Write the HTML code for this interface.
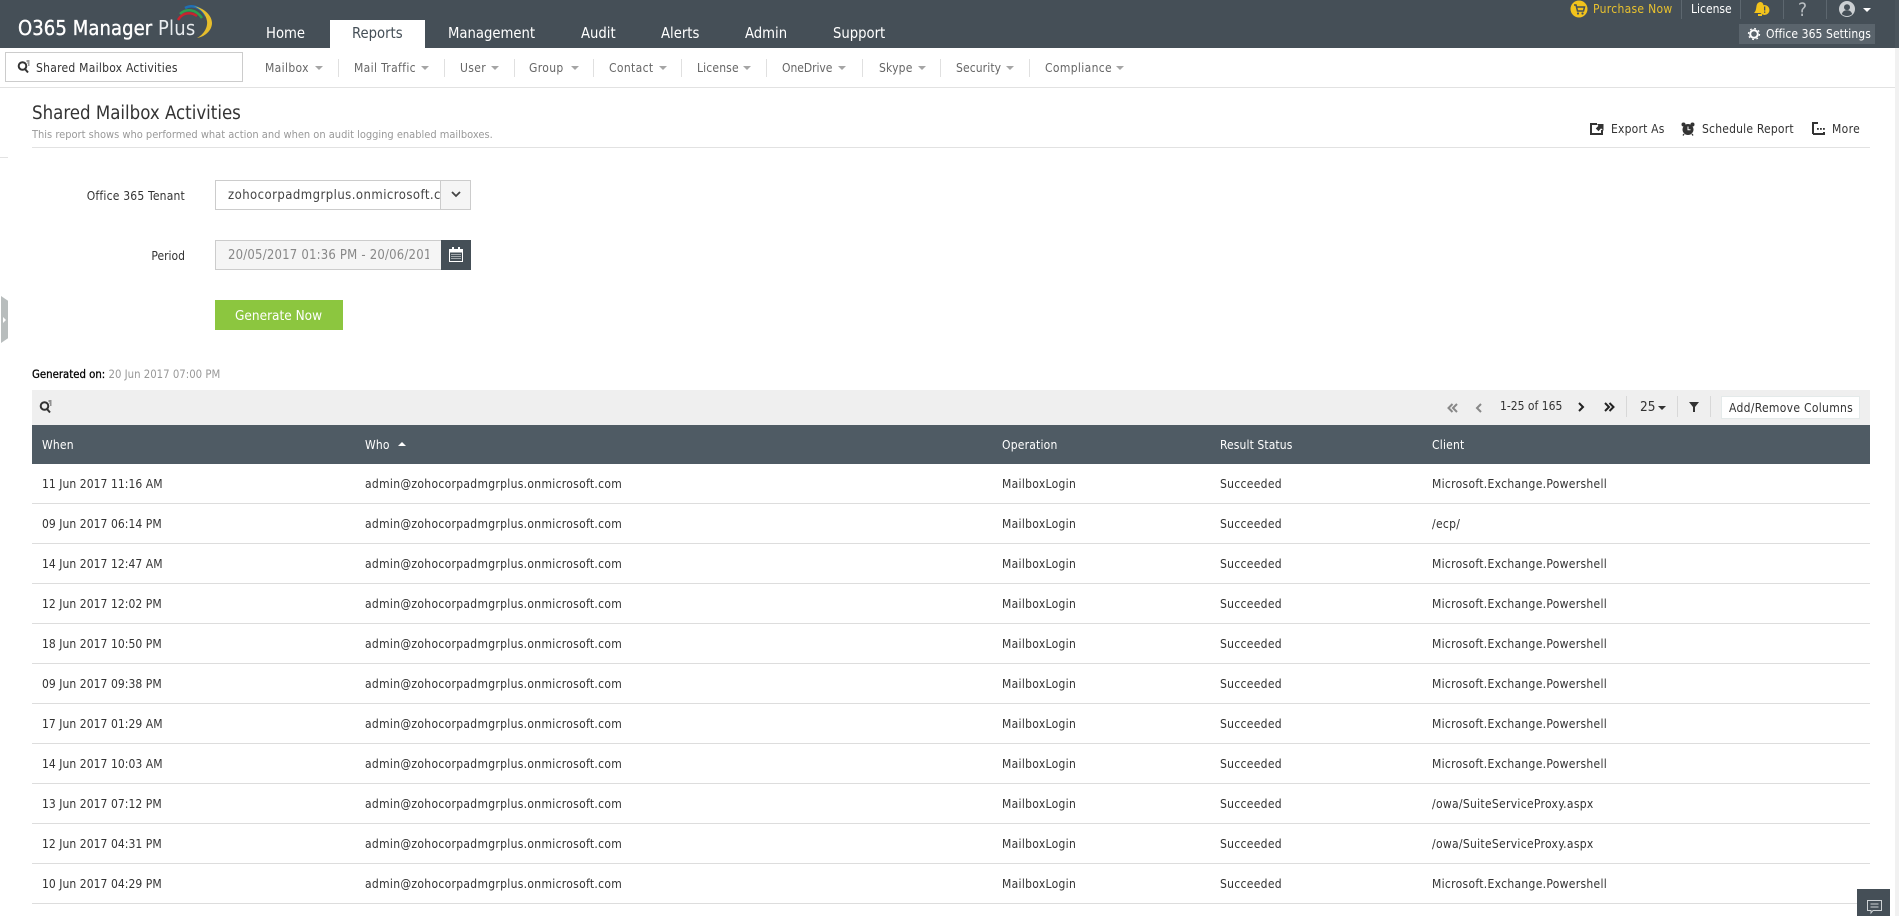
<!DOCTYPE html>
<html lang="en"><head><meta charset="utf-8"><title>Shared Mailbox Activities</title>
<style>
html,body{margin:0;padding:0;background:#fff;width:1899px;height:916px;overflow:hidden}
body{position:relative;font-family:"DejaVu Sans Condensed","DejaVu Sans","Liberation Sans",sans-serif;font-stretch:condensed;font-size:12px;color:#333}
.t{position:absolute;white-space:nowrap;line-height:20px;height:20px}
.b{position:absolute}
.nav{font-size:14.7px;color:#fff;top:24px}
.sub{font-size:12px;color:#666;top:58px;letter-spacing:.35px}
.car{position:absolute;width:0;height:0;border-left:4px solid transparent;border-right:4px solid transparent;border-top:4px solid #a5a5a5;top:66px}
.sep{position:absolute;width:1px;height:18px;background:#e0e0e0;top:59px}
.hsep{position:absolute;width:1px;height:19px;background:#5d676f;top:0}
.th{font-size:12px;color:#fff;top:435px;letter-spacing:.2px}
.td{font-size:12px;color:#333;letter-spacing:.3px}
.d{letter-spacing:.05px}
.act{top:119px;color:#333;letter-spacing:.2px}
.line{position:absolute;left:32px;width:1838px;height:1px;background:#ddd}
.tsep{position:absolute;width:1px;height:21px;background:#d8d8d8;top:396px}
svg{position:absolute;overflow:visible}
</style></head><body>
<div class="b" style="left:0;top:0;width:1899px;height:48px;background:#454f57"></div>
<div class="t" style="left:18px;top:18px;font-size:20px;color:#fff;letter-spacing:.1px;-webkit-text-stroke:.35px #fff">O365 Manager</div>
<div class="t" style="left:158px;top:18px;font-size:20px;color:#e8ecef;letter-spacing:.2px">Plus</div>
<svg style="left:170px;top:0" width="48" height="40" viewBox="0 0 48 40" fill="none">
<path d="M8 20C12 13 20 11 27 16" stroke="#c8242f" stroke-width="2.500"/>
<path d="M10 14C16 8 26 9 32 18" stroke="#2f9e4f" stroke-width="2.500"/>
<path d="M15 8C22 4 31 7 36 16" stroke="#1f6fb5" stroke-width="2.500"/>
<path d="M23 6C35 8 42 16 42 23C42 31 34 37 27 38C33 35 38 28 37 21C36 14 30 8 23 6Z" fill="#e6bd2c"/>
</svg>
<div class="b" style="left:330px;top:20px;width:95px;height:28px;background:#fff"></div>
<div class="t nav" style="left:266px">Home</div>
<div class="t nav" style="left:352px;color:#454f57">Reports</div>
<div class="t nav" style="left:448px">Management</div>
<div class="t nav" style="left:581px">Audit</div>
<div class="t nav" style="left:661px">Alerts</div>
<div class="t nav" style="left:745px">Admin</div>
<div class="t nav" style="left:833px">Support</div>
<svg style="left:1570px;top:0" width="18" height="18" viewBox="0 0 18 18"><circle cx="9" cy="9" r="8.500" fill="#f2c31c"/><path d="M4 5h2l1.500 6h6l1-4H7" fill="none" stroke="#454f57" stroke-width="1.500"/><circle cx="8" cy="13.500" r="1.100" fill="#454f57"/><circle cx="12.500" cy="13.500" r="1.100" fill="#454f57"/></svg>
<div class="t" style="left:1593px;top:-1px;color:#e8c12f;letter-spacing:.3px">Purchase Now</div>
<div class="hsep" style="left:1681px"></div>
<div class="t" style="left:1691px;top:-1px;color:#fff">License</div>
<div class="hsep" style="left:1740px"></div>
<svg style="left:1753px;top:1px" width="17" height="16" viewBox="0 0 17 16"><path d="M1 12C3 10 3 8 3.500 5C4 2 6 1 7.500 1C9 1 10 2 10.500 4L10 12Z" fill="#f2c31c"/><circle cx="11.500" cy="9" r="5" fill="#f2c31c"/><rect x="11" y="5.500" width="1.300" height="4" fill="#454f57"/><rect x="11" y="10.500" width="1.300" height="1.300" fill="#454f57"/><rect x="5" y="13" width="4" height="2" fill="#f2c31c"/></svg>
<div class="hsep" style="left:1783px"></div>
<div class="t" style="left:1798px;top:0;font-size:19px;color:#b9bec2">?</div>
<div class="hsep" style="left:1826px"></div>
<svg style="left:1839px;top:1px" width="16" height="16" viewBox="0 0 16 16"><circle cx="8" cy="8" r="8" fill="#ccd0d3"/><circle cx="8" cy="6.200" r="3" fill="#454f57"/><path d="M2.800 13c1-3 3-3.800 5.200-3.800s4.200.8 5.200 3.800c-3 2.600-7.400 2.600-10.400 0z" fill="#454f57"/></svg>
<div class="b" style="left:1863px;top:8px;width:0;height:0;border-left:4px solid transparent;border-right:4px solid transparent;border-top:4px solid #fff"></div>
<div class="b" style="left:1739px;top:24px;width:136px;height:20px;background:#5a646c"></div>
<svg style="left:1748px;top:28px" width="12" height="12" viewBox="0 0 12 12"><circle cx="6" cy="6" r="3.800" fill="none" stroke="#fff" stroke-width="2"/><circle cx="6" cy="6" r="5.500" fill="none" stroke="#fff" stroke-width="1.300" stroke-dasharray="1.800 2.520"/></svg>
<div class="t" style="left:1766px;top:24px;color:#fff;letter-spacing:.08px">Office 365 Settings</div>

<div class="b" style="left:0;top:87px;width:1895px;height:1px;background:#e2e2e2"></div>
<div class="b" style="left:5px;top:52px;width:236px;height:28px;border:1px solid #ccc"></div>
<svg style="left:17px;top:60px" width="14" height="14" viewBox="0 0 14 14" fill="none"><circle cx="5.500" cy="6" r="3.800" stroke="#333" stroke-width="2"/><path d="M8 9l3 3.500" stroke="#333" stroke-width="2"/><path d="M9.500 1h3M10.500 3h2M11 5h1.500" stroke="#333" stroke-width=".9"/></svg>
<div class="t" style="left:36px;top:58px;color:#333;letter-spacing:.25px">Shared Mailbox Activities</div>
<div class="t sub" style="left:265px">Mailbox</div><div class="car" style="left:315px"></div><div class="sep" style="left:338px"></div>
<div class="t sub" style="left:354px">Mail Traffic</div><div class="car" style="left:421px"></div><div class="sep" style="left:444px"></div>
<div class="t sub" style="left:460px">User</div><div class="car" style="left:491px"></div><div class="sep" style="left:514px"></div>
<div class="t sub" style="left:529px">Group</div><div class="car" style="left:571px"></div><div class="sep" style="left:593px"></div>
<div class="t sub" style="left:609px">Contact</div><div class="car" style="left:659px"></div><div class="sep" style="left:681px"></div>
<div class="t sub" style="left:697px;letter-spacing:.15px">License</div><div class="car" style="left:743px"></div><div class="sep" style="left:766px"></div>
<div class="t sub" style="left:782px;letter-spacing:-.05px">OneDrive</div><div class="car" style="left:838px"></div><div class="sep" style="left:862px"></div>
<div class="t sub" style="left:879px;letter-spacing:.2px">Skype</div><div class="car" style="left:918px"></div><div class="sep" style="left:940px"></div>
<div class="t sub" style="left:956px;letter-spacing:.1px">Security</div><div class="car" style="left:1006px"></div><div class="sep" style="left:1029px"></div>
<div class="t sub" style="left:1045px">Compliance</div><div class="car" style="left:1116px"></div>

<div class="t" style="left:32px;top:104px;font-size:18.500px;color:#333">Shared Mailbox Activities</div>
<div class="t" style="left:32px;top:125px;font-size:11px;color:#999;letter-spacing:-.01px">This report shows who performed what action and when on audit logging enabled mailboxes.</div>
<div class="b" style="left:32px;top:147px;width:1838px;height:1px;background:#e2e2e2"></div>

<svg style="left:1590px;top:122px" width="14" height="14" viewBox="0 0 14 14"><path d="M0 1h7v2H2v8h9V8h2v5H0z" fill="#333"/><path d="M8 2.500h5v5l-2-2-2.500 3-2-2 2.500-2.500z" fill="#333" stroke="#333"/></svg>
<div class="t act" style="left:1611px">Export As</div>
<svg style="left:1681px;top:121px" width="14" height="15" viewBox="0 0 14 15"><circle cx="7" cy="8.500" r="5.500" fill="#333"/><circle cx="2.500" cy="3.500" r="2" fill="#333"/><circle cx="11.500" cy="3.500" r="2" fill="#333"/><path d="M7 5.500v3.200h2.500" stroke="#fff" fill="none"/><path d="M3 13l-1 1.500M11 13l1 1.500" stroke="#333" stroke-width="1.300"/></svg>
<div class="t act" style="left:1702px">Schedule Report</div>
<svg style="left:1812px;top:122px" width="13" height="13" viewBox="0 0 13 13"><path d="M1 12V1h5M1 12h11v-2" stroke="#333" stroke-width="2" fill="none"/><rect x="5" y="6" width="1.800" height="1.800" fill="#333"/><rect x="8" y="6" width="1.800" height="1.800" fill="#333"/><rect x="11" y="6" width="1.800" height="1.800" fill="#333"/></svg>
<div class="t act" style="left:1832px;letter-spacing:.35px">More</div>

<div class="t" style="right:1714px;top:186px;color:#333;letter-spacing:.2px">Office 365 Tenant</div>
<div class="b" style="left:215px;top:180px;width:254px;height:28px;border:1px solid #ccc"></div>
<div class="b" style="left:440px;top:181px;width:29px;height:28px;background:#f5f5f5;border-left:1px solid #ccc"></div>
<div class="t" style="left:228px;top:186px;width:212px;overflow:hidden;font-size:13px;color:#444;letter-spacing:.45px">zohocorpadmgrplus.onmicrosoft.com</div>
<svg style="left:451px;top:191px" width="10" height="7" viewBox="0 0 10 7"><path d="M1 1l4 4 4-4" fill="none" stroke="#444" stroke-width="1.800"/></svg>
<div class="t" style="right:1714px;top:246px;color:#333">Period</div>
<div class="b" style="left:215px;top:240px;width:225px;height:28px;border:1px solid #ccc;background:#f5f5f5"></div>
<div class="t" style="left:228px;top:246px;width:201px;overflow:hidden;font-size:13px;color:#888;letter-spacing:.2px">20/05/2017 01:36 PM - 20/06/2017 01:36 PM</div>
<div class="b" style="left:441px;top:240px;width:30px;height:30px;background:#454f57"></div>
<svg style="left:449px;top:247px" width="14" height="15" viewBox="0 0 14 15"><path d="M.5 2.500h13v12H.5z" fill="none" stroke="#fff"/><path d="M.5 2.500h13v3H.5z" fill="#fff"/><rect x="3" y="0" width="2" height="3.500" fill="#fff"/><rect x="9" y="0" width="2" height="3.500" fill="#fff"/><path d="M2.500 7.500h9M2.500 9.500h9M2.500 11.500h9" stroke="#fff" stroke-dasharray="1 1"/></svg>
<div class="b" style="left:215px;top:300px;width:128px;height:30px;background:#8cc63f"></div>
<div class="t" style="left:235px;top:306px;font-size:13.500px;color:#fff">Generate Now</div>
<div class="b" style="left:1px;top:296px;width:7px;height:47px;background:#b8bdbd;clip-path:polygon(0 0,100% 10%,100% 90%,0 100%)"></div>
<div class="b" style="left:3px;top:317px;width:0;height:0;border-left:3px solid #fff;border-top:3px solid transparent;border-bottom:3px solid transparent"></div>
<div class="b" style="left:0;top:157px;width:8px;height:1px;background:#e2e2e2"></div>
<div class="t" style="left:32px;top:365px;font-size:11.300px;color:#000"><span style="-webkit-text-stroke:.25px #000">Generated on:</span> <span style="color:#999">20 Jun 2017 07:00 PM</span></div>

<div class="b" style="left:32px;top:390px;width:1838px;height:35px;background:#efefef"></div>
<svg style="left:39px;top:400px" width="14" height="14" viewBox="0 0 14 14" fill="none"><circle cx="5.500" cy="6" r="3.800" stroke="#333" stroke-width="2"/><path d="M8 9l3 3.500" stroke="#333" stroke-width="2"/><path d="M9.500 1h3M10.500 3h2M11 5h1.500" stroke="#333" stroke-width=".9"/></svg>
<svg style="left:1447px;top:403px" width="11" height="10" viewBox="0 0 11 10" fill="none" stroke="#888" stroke-width="2"><path d="M5.500 1l-4 4 4 4M10 1L6 5l4 4"/></svg>
<svg style="left:1475px;top:403px" width="7" height="10" viewBox="0 0 7 10" fill="none" stroke="#888" stroke-width="2"><path d="M6 1L2 5l4 4"/></svg>
<div class="t" style="left:1500px;top:396px">1-25 of 165</div>
<svg style="left:1578px;top:402px" width="7" height="10" viewBox="0 0 7 10" fill="none" stroke="#222" stroke-width="2"><path d="M1 1l4 4-4 4"/></svg>
<svg style="left:1604px;top:402px" width="11" height="10" viewBox="0 0 11 10" fill="none" stroke="#222" stroke-width="2"><path d="M1 1l4 4-4 4M5.500 1l4 4-4 4"/></svg>
<div class="tsep" style="left:1626px"></div>
<div class="t" style="left:1640px;top:397px;font-size:13.500px">25</div>
<div class="b" style="left:1658px;top:406px;width:0;height:0;border-left:4px solid transparent;border-right:4px solid transparent;border-top:4px solid #333"></div>
<div class="tsep" style="left:1677px"></div>
<svg style="left:1689px;top:402px" width="10" height="10" viewBox="0 0 10 10"><path d="M0 0h10L6 5v5H4V5z" fill="#333"/></svg>
<div class="tsep" style="left:1710px"></div>
<div class="b" style="left:1721px;top:396px;width:137px;height:21px;background:#fff;border:1px solid #e4eaea"></div>
<div class="t" style="left:1729px;top:398px;letter-spacing:.3px">Add/Remove Columns</div>

<div class="b" style="left:32px;top:425px;width:1838px;height:39px;background:#4f5b64"></div>
<div class="t th" style="left:42px">When</div>
<div class="t th" style="left:365px">Who</div>
<div class="b" style="left:398px;top:442px;width:0;height:0;border-left:4px solid transparent;border-right:4px solid transparent;border-bottom:4px solid #fff"></div>
<div class="t th" style="left:1002px">Operation</div>
<div class="t th" style="left:1220px;letter-spacing:.1px">Result Status</div>
<div class="t th" style="left:1432px">Client</div>

<div class="t td d" style="left:42px;top:474px">11 Jun 2017 11:16 AM</div><div class="t td" style="left:365px;top:474px">admin@zohocorpadmgrplus.onmicrosoft.com</div><div class="t td" style="left:1002px;top:474px">MailboxLogin</div><div class="t td" style="left:1220px;top:474px">Succeeded</div><div class="t td" style="left:1432px;top:474px">Microsoft.Exchange.Powershell</div><div class="line" style="top:503px"></div>
<div class="t td d" style="left:42px;top:514px">09 Jun 2017 06:14 PM</div><div class="t td" style="left:365px;top:514px">admin@zohocorpadmgrplus.onmicrosoft.com</div><div class="t td" style="left:1002px;top:514px">MailboxLogin</div><div class="t td" style="left:1220px;top:514px">Succeeded</div><div class="t td" style="left:1432px;top:514px">/ecp/</div><div class="line" style="top:543px"></div>
<div class="t td d" style="left:42px;top:554px">14 Jun 2017 12:47 AM</div><div class="t td" style="left:365px;top:554px">admin@zohocorpadmgrplus.onmicrosoft.com</div><div class="t td" style="left:1002px;top:554px">MailboxLogin</div><div class="t td" style="left:1220px;top:554px">Succeeded</div><div class="t td" style="left:1432px;top:554px">Microsoft.Exchange.Powershell</div><div class="line" style="top:583px"></div>
<div class="t td d" style="left:42px;top:594px">12 Jun 2017 12:02 PM</div><div class="t td" style="left:365px;top:594px">admin@zohocorpadmgrplus.onmicrosoft.com</div><div class="t td" style="left:1002px;top:594px">MailboxLogin</div><div class="t td" style="left:1220px;top:594px">Succeeded</div><div class="t td" style="left:1432px;top:594px">Microsoft.Exchange.Powershell</div><div class="line" style="top:623px"></div>
<div class="t td d" style="left:42px;top:634px">18 Jun 2017 10:50 PM</div><div class="t td" style="left:365px;top:634px">admin@zohocorpadmgrplus.onmicrosoft.com</div><div class="t td" style="left:1002px;top:634px">MailboxLogin</div><div class="t td" style="left:1220px;top:634px">Succeeded</div><div class="t td" style="left:1432px;top:634px">Microsoft.Exchange.Powershell</div><div class="line" style="top:663px"></div>
<div class="t td d" style="left:42px;top:674px">09 Jun 2017 09:38 PM</div><div class="t td" style="left:365px;top:674px">admin@zohocorpadmgrplus.onmicrosoft.com</div><div class="t td" style="left:1002px;top:674px">MailboxLogin</div><div class="t td" style="left:1220px;top:674px">Succeeded</div><div class="t td" style="left:1432px;top:674px">Microsoft.Exchange.Powershell</div><div class="line" style="top:703px"></div>
<div class="t td d" style="left:42px;top:714px">17 Jun 2017 01:29 AM</div><div class="t td" style="left:365px;top:714px">admin@zohocorpadmgrplus.onmicrosoft.com</div><div class="t td" style="left:1002px;top:714px">MailboxLogin</div><div class="t td" style="left:1220px;top:714px">Succeeded</div><div class="t td" style="left:1432px;top:714px">Microsoft.Exchange.Powershell</div><div class="line" style="top:743px"></div>
<div class="t td d" style="left:42px;top:754px">14 Jun 2017 10:03 AM</div><div class="t td" style="left:365px;top:754px">admin@zohocorpadmgrplus.onmicrosoft.com</div><div class="t td" style="left:1002px;top:754px">MailboxLogin</div><div class="t td" style="left:1220px;top:754px">Succeeded</div><div class="t td" style="left:1432px;top:754px">Microsoft.Exchange.Powershell</div><div class="line" style="top:783px"></div>
<div class="t td d" style="left:42px;top:794px">13 Jun 2017 07:12 PM</div><div class="t td" style="left:365px;top:794px">admin@zohocorpadmgrplus.onmicrosoft.com</div><div class="t td" style="left:1002px;top:794px">MailboxLogin</div><div class="t td" style="left:1220px;top:794px">Succeeded</div><div class="t td" style="left:1432px;top:794px">/owa/SuiteServiceProxy.aspx</div><div class="line" style="top:823px"></div>
<div class="t td d" style="left:42px;top:834px">12 Jun 2017 04:31 PM</div><div class="t td" style="left:365px;top:834px">admin@zohocorpadmgrplus.onmicrosoft.com</div><div class="t td" style="left:1002px;top:834px">MailboxLogin</div><div class="t td" style="left:1220px;top:834px">Succeeded</div><div class="t td" style="left:1432px;top:834px">/owa/SuiteServiceProxy.aspx</div><div class="line" style="top:863px"></div>
<div class="t td d" style="left:42px;top:874px">10 Jun 2017 04:29 PM</div><div class="t td" style="left:365px;top:874px">admin@zohocorpadmgrplus.onmicrosoft.com</div><div class="t td" style="left:1002px;top:874px">MailboxLogin</div><div class="t td" style="left:1220px;top:874px">Succeeded</div><div class="t td" style="left:1432px;top:874px">Microsoft.Exchange.Powershell</div><div class="line" style="top:903px"></div>

<div class="b" style="left:1857px;top:889px;width:33px;height:27px;background:#454f57"></div>
<svg style="left:1867px;top:900px" width="15" height="14" viewBox="0 0 15 14" fill="none" stroke="#cfd3d6"><path d="M.5.500h14v10H6l-2 2.500v-2.500H.5z"/><path d="M3.500 4h8M3.500 7h8"/></svg>
<div class="b" style="left:1895px;top:48px;width:4px;height:868px;background:#f1f1f1"></div>
<div class="b" style="left:1895px;top:0;width:4px;height:48px;background:#4a545c"></div>
</body></html>
